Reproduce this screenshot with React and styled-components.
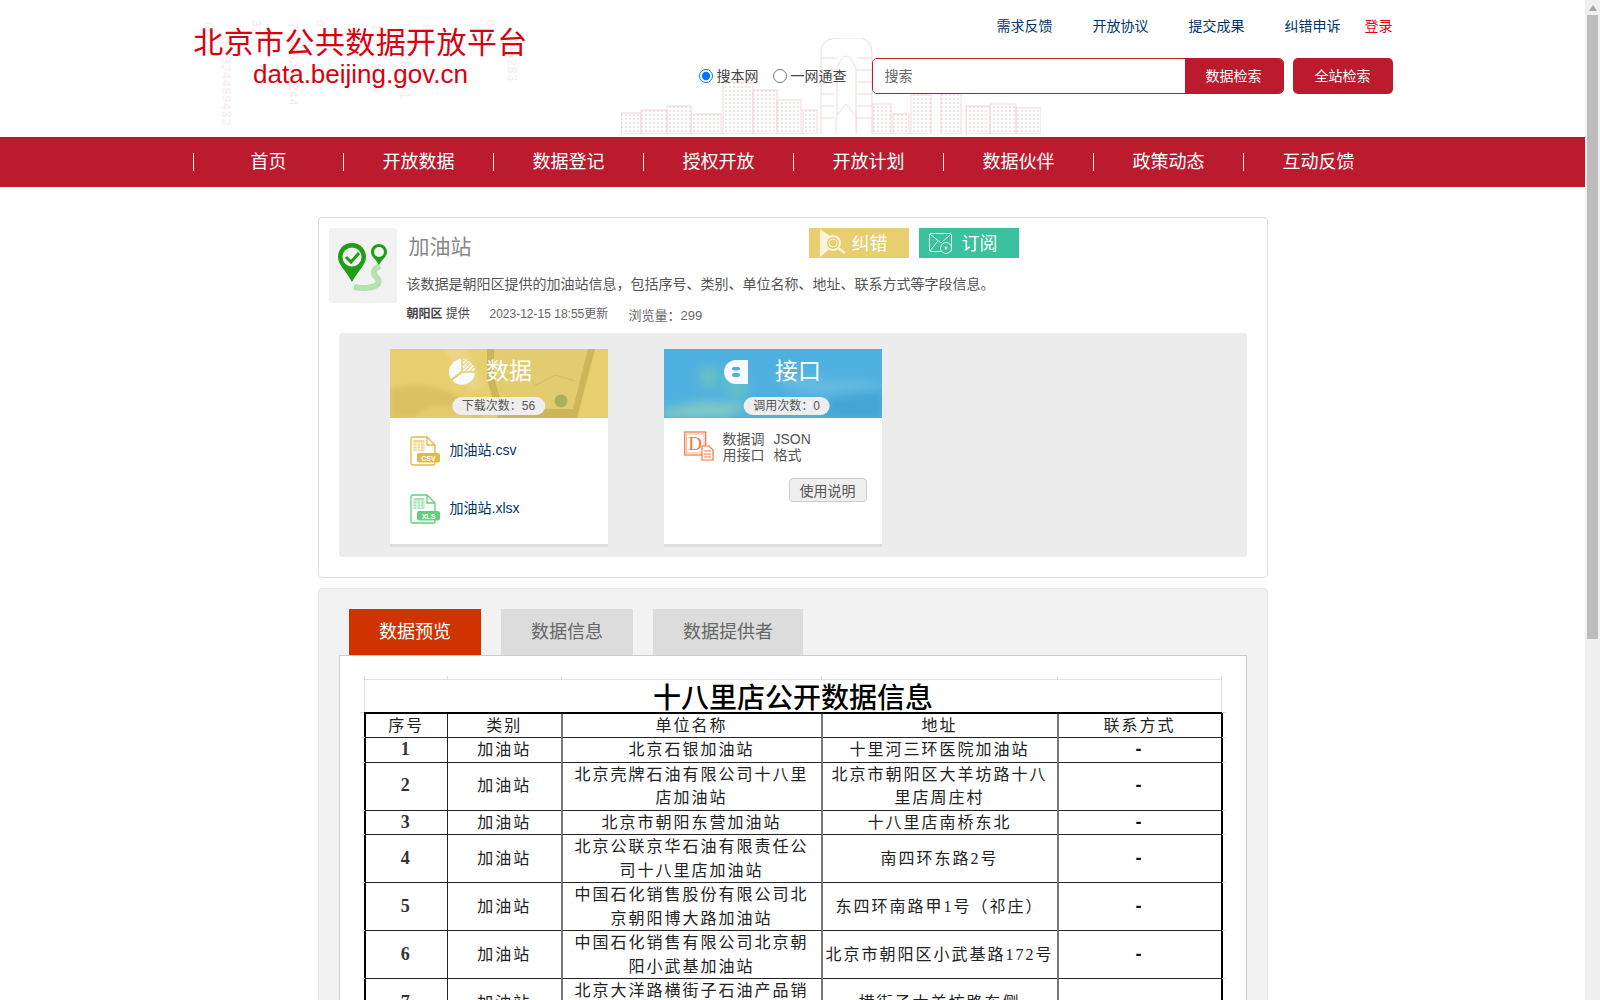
import React from 'react';
import styled, { createGlobalStyle } from 'styled-components';

const GlobalStyle = createGlobalStyle`
body{
    margin:0;
    background:#fff;
    color:#555;
    font-family:"Liberation Sans","Noto Sans CJK SC",sans-serif;
    font-size:14px;
}
`;

const navItems = ['首页', '开放数据', '数据登记', '授权开放', '开放计划', '数据伙伴', '政策动态', '互动反馈'];
const topLinks = ['需求反馈', '开放协议', '提交成果', '纠错申诉'];
const logoStrips = [
    ['00', 8, 8], ['190324489432', 26, 20], ['32', 56, 6], ['75865233244', 93, 8], ['0', 120, 6],
    ['126721849', 176, 10], ['64287631', 205, 24], ['8463', 226, 10], ['0', 290, 6], ['946283', 312, 22],
];

const rows = [
    { no: '1', name: '北京石银加油站', addr: '十里河三环医院加油站', h: 24 },
    { no: '2', name: '北京壳牌石油有限公司十八里\n店加油站', addr: '北京市朝阳区大羊坊路十八\n里店周庄村', h: 47 },
    { no: '3', name: '北京市朝阳东营加油站', addr: '十八里店南桥东北', h: 24 },
    { no: '4', name: '北京公联京华石油有限责任公\n司十八里店加油站', addr: '南四环东路2号', h: 47 },
    { no: '5', name: '中国石化销售股份有限公司北\n京朝阳博大路加油站', addr: '东四环南路甲1号（祁庄）', h: 47 },
    { no: '6', name: '中国石化销售有限公司北京朝\n阳小武基加油站', addr: '北京市朝阳区小武基路172号', h: 47 },
    { no: '7', name: '北京大洋路横街子石油产品销\n\u00a0', addr: '横街子大羊坊路东侧', h: 48 },
];

const Skyline = () => {
    const blocks = [
        [0, 75, 20, 21], [20, 72, 26, 24], [46, 68, 24, 28], [70, 76, 30, 20], [102, 44, 30, 52],
        [132, 52, 24, 44], [156, 62, 24, 34], [182, 72, 14, 24], [252, 66, 18, 30], [272, 76, 16, 20],
        [290, 57, 20, 39], [320, 56, 20, 40], [345, 68, 24, 28], [369, 66, 26, 30], [395, 70, 25, 26],
    ];
    return (
        <SkylineBox width="420" height="96" viewBox="0 0 420 96">
            <defs>
                <pattern id="windows" width="4" height="4" patternUnits="userSpaceOnUse">
                    <rect width="2" height="2" fill="#f6e3e4" />
                </pattern>
            </defs>
            {blocks.map(([x, y, w, h]) => (
                <rect key={x} x={x} y={y} width={w} height={h} fill="url(#windows)" stroke="#f1d8da" />
            ))}
            <path d="M200 96V14Q200 2 214 0H240Q250 2 251 14V96" fill="#fff" stroke="#f1d8da" />
            <path d="M216 96V30Q225 6 235 30V96M200 20H216M200 32H214M200 44H213M200 56H213M200 68H213M200 80H213M236 20H251M236 32H251M236 44H251M236 56H251M236 68H251M236 80H251" fill="none" stroke="#f1d8da" />
            <path d="M215 96V78L225 66L235 78V96" fill="#fff" stroke="#f1d8da" />
        </SkylineBox>
    );
};

const PinIcon = () => (
    <svg width="68" height="75" viewBox="0 0 68 75">
        <path d="M25 59C43 62 54 57 48 50C43 45 44 41 51 38" fill="none" stroke="#b5e0b2" strokeWidth="6" />
        <path d="M23 15C14 15 9 22 9 29C9 37 18 44 23 54C28 44 37 37 37 29C37 22 32 15 23 15Z" fill="#1f9e17" />
        <circle cx="23" cy="29" r="9.5" fill="#f2f2f2" />
        <path d="M17 29L22 34L30 25" fill="none" stroke="#1f9e17" strokeWidth="3" />
        <path d="M50 16C45 16 42 20 42 24C42 29 47 31 50 37C53 31 58 29 58 24C58 20 55 16 50 16Z" fill="#1f9e17" />
        <circle cx="50" cy="24" r="5" fill="#f2f2f2" />
    </svg>
);

const SearchMark = () => (
    <svg width="40" height="30" viewBox="0 0 40 30">
        <path d="M11 1V29L29 14Z" fill="#fbf3d8" />
        <circle cx="24" cy="15" r="7" fill="#e7cf70" stroke="#fbf3d8" strokeWidth="2" />
        <circle cx="24" cy="15" r="4" fill="none" stroke="#fbf3d8" />
        <path d="M29 20L36 25" stroke="#fbf3d8" strokeWidth="2.5" />
    </svg>
);

const MailMark = () => (
    <svg width="40" height="30" viewBox="0 0 40 30">
        <rect x="10.5" y="5.5" width="22" height="18" rx="1.5" fill="none" stroke="#d6f3ea" />
        <path d="M11 6L22 15L32 6M11 23L19 13" fill="none" stroke="#d6f3ea" />
        <circle cx="27" cy="20" r="5.5" fill="#3bc19d" stroke="#d6f3ea" />
        <circle cx="27" cy="20" r="1.5" fill="#d6f3ea" />
    </svg>
);

const PieMark = () => (
    <svg width="26" height="26" viewBox="0 0 26 26">
        <defs>
            <pattern id="hatch" width="3" height="3" patternUnits="userSpaceOnUse" patternTransform="rotate(45)">
                <rect width="1.6" height="3" fill="#fff" />
            </pattern>
        </defs>
        <path d="M12 12V0A13 13 0 0 0 2 20Z" fill="#f6fbff" />
        <path d="M13.5 14L3.5 21.5A13 13 0 0 0 26 14Z" fill="#f6fbff" />
        <path d="M14 12V0A13 13 0 0 1 26 12Z" fill="url(#hatch)" />
    </svg>
);

const PortMark = () => (
    <svg width="24" height="24" viewBox="0 0 24 24">
        <path d="M24 0H12A12 12 0 0 0 12 24H24Z" fill="#f6fbff" />
        <rect x="8" y="7" width="8" height="3.5" rx="1.7" fill="#4bb0dc" />
        <rect x="8" y="13" width="8" height="4" rx="2" fill="#4bb0dc" />
    </svg>
);

const FileMark = ({ label, color }) => (
    <svg width="30" height="30" viewBox="0 0 30 30">
        <path d="M1 3Q1 1 3 1H17L25 9V28Q25 29 23 29H3Q1 29 1 27Z" fill="#fff" stroke={color} strokeWidth="1.3" />
        <path d="M17 1V9H25" fill="none" stroke={color} strokeWidth="1.3" />
        <rect x="3.5" y="4" width="11" height="11" fill={color} opacity="0.55" />
        <path d="M3.5 7H14.5M3.5 10H14.5M3.5 13H14.5M7 7V15M10.5 7V15" stroke="#fff" strokeWidth="0.7" />
        <rect x="7" y="17" width="23" height="9.5" rx="2" fill={color} />
        <LabelText x="18.5" y="24.6">{label}</LabelText>
    </svg>
);

const DocMark = () => (
    <svg width="30" height="30" viewBox="0 0 30 30">
        <rect x="0.7" y="1" width="21" height="23" fill="none" stroke="#f4763c" strokeWidth="1.2" />
        <rect x="2.5" y="3" width="17.5" height="19" fill="none" stroke="#f9b89a" />
        <DocLetter x="11" y="19">D</DocLetter>
        <path d="M18 15H25L29 19V29H18Z" fill="#fff" stroke="#f4763c" strokeWidth="1.2" />
        <path d="M20 20H27M20 23H27M20 26H27" stroke="#f4763c" />
    </svg>
);

const YellowPhoto = () => (
    <HeadPhoto viewBox="0 0 218 69" preserveAspectRatio="none">
        <defs>
            <filter id="softy"><feGaussianBlur stdDeviation="2" /></filter>
        </defs>
        <g filter="url(#softy)">
            <path d="M0 40C30 30 70 38 95 69H0Z" fill="#dcc163" />
            <path d="M25 69C35 52 70 52 85 69Z" fill="#e3ca6b" />
            <path d="M55 0H75L95 38L80 42Z" fill="#ecd684" />
        </g>
        <path d="M97 0H205L187 69H108L97 30Z" fill="#cdb65a" />
        <path d="M104 0H198L183 60H113L104 28Z" fill="#e3cb70" />
        <path d="M112 30L130 22L146 36L165 26L185 32" fill="none" stroke="#d3bd62" />
        <circle cx="171" cy="52" r="6.5" fill="#a9b059" />
    </HeadPhoto>
);

const BluePhoto = () => (
    <HeadPhoto viewBox="0 0 218 69" preserveAspectRatio="none">
        <defs>
            <filter id="soft"><feGaussianBlur stdDeviation="5" /></filter>
        </defs>
        <g filter="url(#soft)">
            <circle cx="45" cy="28" r="11" fill="#68bfc4" />
            <circle cx="72" cy="38" r="12" fill="#62bfc9" />
            <path d="M0 60L40 52L90 56L60 69H0Z" fill="#7fc9c4" />
            <path d="M110 25L218 35V50L130 42Z" fill="#66bbe2" />
            <path d="M170 45L218 40V69H160Z" fill="#44a6d6" />
        </g>
    </HeadPhoto>
);

const App = () => {
    return (
        <>
            <GlobalStyle />
            <ScrollRail>
                <ScrollArrow />
                <ScrollThumb />
            </ScrollRail>
            <Page>
                <Top>
                    <Skyline />
                    <Logo>
                        <Strips>
                            {logoStrips.map(([text, left, top]) => (
                                <Strip key={left} $left={left} $top={top}>{text}</Strip>
                            ))}
                        </Strips>
                        <LogoTitle>北京市公共数据开放平台</LogoTitle>
                        <LogoSub>data.beijing.gov.cn</LogoSub>
                    </Logo>
                    <TopRight>
                        <TopLinks>
                            {topLinks.map(t => <TopLink key={t}>{t}</TopLink>)}
                            <Login>登录</Login>
                        </TopLinks>
                        <SearchRow>
                            <RadioLabel><input type="radio" name="scope" defaultChecked />搜本网</RadioLabel>
                            <RadioLabel><input type="radio" name="scope" />一网通查</RadioLabel>
                            <SearchBox>
                                <SearchInput placeholder="搜索" />
                                <SearchButton>数据检索</SearchButton>
                            </SearchBox>
                            <WholeButton>全站检索</WholeButton>
                        </SearchRow>
                    </TopRight>
                </Top>
                <Nav>
                    <NavInner>
                        {navItems.map(t => <NavItem key={t}>{t}</NavItem>)}
                    </NavInner>
                </Nav>
                <Main>
                    <InfoCard>
                        <InfoTop>
                            <IconBox><PinIcon /></IconBox>
                            <InfoText>
                                <TitleRow>
                                    <Title>加油站</Title>
                                    <ActionButton $bg="#e7cf70"><SearchMark />纠错</ActionButton>
                                    <ActionButton $bg="#3bc19d"><MailMark />订阅</ActionButton>
                                </TitleRow>
                                <Desc>该数据是朝阳区提供的加油站信息，包括序号、类别、单位名称、地址、联系方式等字段信息。</Desc>
                                <Meta>
                                    <Provider><b>朝阳区</b> 提供</Provider>
                                    <Updated>2023-12-15 18:55更新</Updated>
                                    <Views>浏览量：299</Views>
                                </Meta>
                            </InfoText>
                        </InfoTop>
                        <Downloads>
                            <DownCard>
                                <DownHead $bg="#e7cf70">
                                    <YellowPhoto />
                                    <HeadTitle $shift={16}><PieMark /><span>数据</span></HeadTitle>
                                    <Pill>下载次数：56</Pill>
                                </DownHead>
                                <FileList>
                                    <FileRow><FileMark label="CSV" color="#e3b93f" /><FileLink>加油站.csv</FileLink></FileRow>
                                    <FileRow><FileMark label="XLS" color="#5fd07f" /><FileLink>加油站.xlsx</FileLink></FileRow>
                                </FileList>
                            </DownCard>
                            <DownCard>
                                <DownHead $bg="#4fb1df">
                                    <BluePhoto />
                                    <HeadTitle $gap={27} $shift={0}><PortMark /><span>接口</span></HeadTitle>
                                    <Pill $offset={14}>调用次数：0</Pill>
                                </DownHead>
                                <ApiBody>
                                    <DocMark />
                                    <ApiCol $w={51}>数据调用接口</ApiCol>
                                    <ApiCol $w={40}>JSON 格式</ApiCol>
                                </ApiBody>
                                <ApiFoot><HelpButton>使用说明</HelpButton></ApiFoot>
                            </DownCard>
                        </Downloads>
                    </InfoCard>
                    <PreviewCard>
                        <Tabs>
                            <Tab $active>数据预览</Tab>
                            <Tab>数据信息</Tab>
                            <Tab $wide>数据提供者</Tab>
                        </Tabs>
                        <Preview>
                            <Sheet>
                                <colgroup>
                                    <col width="83" />
                                    <col width="114" />
                                    <col width="260" />
                                    <col width="236" />
                                    <col width="164" />
                                </colgroup>
                                <tbody>
                                    <TickRow>
                                        <td /><td /><td /><td /><td />
                                    </TickRow>
                                    <TitleSheetRow>
                                        <td colSpan="5">十八里店公开数据信息</td>
                                    </TitleSheetRow>
                                    <HeadRow>
                                        <Cell>序号</Cell>
                                        <Cell>类别</Cell>
                                        <Cell>单位名称</Cell>
                                        <Cell>地址</Cell>
                                        <Cell>联系方式</Cell>
                                    </HeadRow>
                                    {rows.map(r => (
                                        <DataRow key={r.no} $h={r.h}>
                                            <NumCell>{r.no}</NumCell>
                                            <Cell>加油站</Cell>
                                            <Cell>{r.name}</Cell>
                                            <Cell>{r.addr}</Cell>
                                            <DashCell>-</DashCell>
                                        </DataRow>
                                    ))}
                                </tbody>
                            </Sheet>
                        </Preview>
                    </PreviewCard>
                </Main>
            </Page>
        </>
    );
};

const ScrollRail = styled.div`
position:fixed;
top:0;
right:0;
bottom:0;
width:15px;
background:#f0f0f0;
z-index:5;
`;
const ScrollArrow = styled.div`
width:0;
height:0;
margin:5px auto 4px;
border-left:4px solid transparent;
border-right:4px solid transparent;
border-bottom:6px solid #a3a3a3;
`;
const ScrollThumb = styled.div`
width:11px;
height:624px;
margin:0 auto;
background:#bdbdbd;
`;
const Page = styled.div`
width:1585px;
`;
const Top = styled.header`
position:relative;
width:1200px;
height:137px;
margin:0 auto;
display:flex;
justify-content:space-between;
`;
const SkylineBox = styled.svg`
position:absolute;
left:428px;
top:38px;
`;
const Logo = styled.div`
position:relative;
width:336px;
padding-top:22px;
color:#d9000f;
text-align:center;
`;
const Strips = styled.div`
position:absolute;
inset:14px 0 4px 0;
overflow:hidden;
`;
const Strip = styled.span`
position:absolute;
left:${p => p.$left}px;
top:${p => p.$top}px;
writing-mode:vertical-rl;
font-size:12px;
color:#f8eaea;
letter-spacing:1px;
`;
const LogoTitle = styled.div`
position:relative;
font-size:30px;
line-height:36px;
white-space:nowrap;
letter-spacing:0.4px;
font-family:"Noto Sans CJK SC",sans-serif;
`;
const LogoSub = styled.div`
position:relative;
font-size:26px;
line-height:32px;
font-family:"Liberation Sans",sans-serif;
`;
const TopRight = styled.div`
position:relative;
display:flex;
flex-direction:column;
align-items:flex-end;
padding-top:16px;
`;
const TopLinks = styled.div`
display:flex;
line-height:20px;
`;
const TopLink = styled.a`
color:#003366;
margin-right:40px;
&:nth-child(4){
    margin-right:24px;
}
`;
const Login = styled.a`
color:#e60012;
`;
const SearchRow = styled.div`
display:flex;
align-items:center;
margin-top:22px;
height:36px;
`;
const RadioLabel = styled.label`
display:flex;
align-items:center;
margin-right:14px;
padding-bottom:2px;
color:#444;
input{
    margin:2px 4px 0 0;
    width:14px;
    height:14px;
}
&:nth-child(2){
    margin-right:25px;
}
`;
const SearchBox = styled.div`
display:flex;
width:412px;
height:36px;
box-sizing:border-box;
border:1px solid #bc1b2d;
border-radius:5px;
overflow:hidden;
`;
const SearchInput = styled.input`
flex:1;
min-width:0;
border:0;
outline:0;
padding:0 12px;
font-size:14px;
font-family:inherit;
&::placeholder{
    color:#666;
}
`;
const SearchButton = styled.button`
width:98px;
padding:0 0 2px;
border:0;
background:#bc1b2d;
color:#fff;
font-size:14px;
font-family:inherit;
`;
const WholeButton = styled(SearchButton)`
width:100px;
height:36px;
margin-left:9px;
border-radius:5px;
`;
const Nav = styled.nav`
background:#bc1b2d;
height:50px;
display:flex;
justify-content:center;
`;
const NavInner = styled.div`
width:1200px;
display:flex;
align-items:center;
`;
const NavItem = styled.a`
width:150px;
height:18px;
box-sizing:border-box;
border-left:1.5px solid #fff;
display:flex;
align-items:center;
justify-content:center;
padding:0 0 4px 1px;
color:#fff;
font-size:18px;
`;
const Main = styled.main`
width:950px;
margin:0 auto;
padding:30px 0 40px;
`;
const InfoCard = styled.section`
box-sizing:border-box;
height:361px;
border:1px solid #ddd;
border-radius:4px;
padding:10px 20px 20px 10px;
`;
const InfoTop = styled.div`
display:flex;
height:105px;
`;
const IconBox = styled.div`
width:68px;
height:75px;
background:#f2f2f2;
border-radius:3px;
margin-right:10px;
`;
const InfoText = styled.div`
flex:1;
`;
const TitleRow = styled.div`
display:flex;
align-items:center;
height:30px;
`;
const Title = styled.h1`
width:400px;
margin:0 0 0 2px;
font-size:21px;
font-weight:normal;
color:#888;
position:relative;
top:2px;
`;
const ActionButton = styled.button`
display:flex;
align-items:center;
gap:3px;
width:100px;
height:30px;
margin-right:10px;
padding:0 0 3px;
border:0;
background:${p => p.$bg};
color:#fff;
font-size:18px;
font-family:inherit;
svg{
    margin-bottom:-3px;
}
`;
const Desc = styled.p`
margin:16px 0 0;
font-size:14px;
line-height:20px;
color:#555;
`;
const Meta = styled.div`
display:flex;
align-items:baseline;
margin-top:11px;
font-size:12px;
line-height:18px;
color:#666;
`;
const Provider = styled.span`
width:83px;
color:#444;
`;
const Updated = styled.span`
width:139px;
`;
const Views = styled.span`
position:relative;
top:2px;
font-size:13px;
`;
const Downloads = styled.div`
display:flex;
gap:56px;
height:224px;
margin-left:10px;
padding:16px 0 0 51px;
box-sizing:border-box;
background:#ececec;
border-radius:4px;
`;
const DownCard = styled.div`
width:218px;
height:198px;
box-sizing:border-box;
background:#fff;
border-bottom:3px solid #ddd;
`;
const DownHead = styled.div`
position:relative;
height:69px;
background:${p => p.$bg};
overflow:hidden;
`;
const HeadPhoto = styled.svg`
position:absolute;
inset:0;
width:100%;
height:100%;
`;
const HeadTitle = styled.div`
position:relative;
display:flex;
align-items:center;
justify-content:center;
gap:${p => p.$gap || 11}px;
height:42px;
padding-right:${p => p.$shift}px;
color:#fff;
font-size:23px;
svg{
    position:relative;
    top:2px;
}
span{
    position:relative;
    top:-1px;
}
`;
const Pill = styled.div`
position:absolute;
left:calc(50% + ${p => p.$offset || 0}px);
bottom:3px;
transform:translateX(-50%);
height:18px;
padding:0 10px;
white-space:nowrap;
background:#eee;
border-radius:9px;
font-size:12px;
line-height:18px;
color:#555;
`;
const FileList = styled.ul`
list-style:none;
margin:0;
padding:18px 0 0 20px;
`;
const FileRow = styled.li`
display:flex;
align-items:center;
gap:10px;
height:30px;
margin-bottom:28px;
`;
const FileLink = styled.a`
color:#003366;
font-size:14px;
padding-bottom:4px;
`;
const LabelText = styled.text`
font-size:7px;
font-weight:bold;
fill:#fff;
text-anchor:middle;
font-family:"Liberation Sans",sans-serif;
`;
const DocLetter = styled.text`
font-size:19px;
fill:#f4763c;
text-anchor:middle;
font-family:"Liberation Serif",serif;
`;
const ApiBody = styled.div`
display:flex;
align-items:flex-start;
padding:13px 0 0 20px;
`;
const ApiCol = styled.div`
width:${p => p.$w}px;
margin-left:9px;
font-size:14px;
line-height:16px;
color:#555;
&:last-child{
    margin-left:0;
}
`;
const ApiFoot = styled.div`
display:flex;
justify-content:flex-end;
padding:15px 15px 0 0;
`;
const HelpButton = styled.button`
width:78px;
height:24px;
padding:0;
background:#efefef;
border:1px solid #ccc;
border-radius:4px;
color:#555;
font-size:14px;
font-family:inherit;
`;
const PreviewCard = styled.section`
margin-top:10px;
box-sizing:border-box;
min-height:920px;
background:#f2f2f2;
border:1px solid #e8e8e8;
border-radius:4px;
padding:20px;
`;
const Tabs = styled.div`
display:flex;
gap:20px;
margin-left:10px;
`;
const Tab = styled.div`
width:${p => p.$wide ? 150 : 132}px;
height:46px;
box-sizing:border-box;
padding:0 0 4px 1px;
display:flex;
align-items:center;
justify-content:center;
font-size:18px;
background:${p => p.$active ? '#cf3400' : '#dcdcdc'};
color:${p => p.$active ? '#fff' : '#666'};
`;
const Preview = styled.div`
background:#fff;
border:1px solid #ccc;
min-height:800px;
padding:20px 24px 0;
`;
const Sheet = styled.table`
width:857px;
table-layout:fixed;
border-collapse:collapse;
color:#222;
font-family:"Liberation Serif","Noto Sans CJK SC",serif;
font-size:16px;
td{
    position:relative;
    padding:0;
    text-align:center;
    white-space:pre-line;
    letter-spacing:2px;
    line-height:23.5px;
}
tr:not(:first-child) > td:first-child::before,
tr:not(:first-child) > td:last-child::after{
    content:'';
    position:absolute;
    bottom:-1px;
    width:4px;
    height:1px;
    background:#ddd;
}
tr:not(:first-child) > td:first-child::before{
    left:-5px;
}
tr:not(:first-child) > td:last-child::after{
    right:-5px;
}
`;
const TickRow = styled.tr`
height:3px;
td{
    border-left:1px solid #ddd;
    line-height:0;
}
td:last-child{
    border-right:1px solid #ddd;
}
`;
const TitleSheetRow = styled.tr`
td{
    border:1px solid #e2e2e2;
    border-bottom:0;
    font-size:28px;
    font-weight:500;
    line-height:27px;
    letter-spacing:0;
    color:#000;
    padding-top:5px;
}
`;
const HeadRow = styled.tr`
height:23px;
td{
    border-top:2px solid #000;
}
`;
const DataRow = styled.tr`
height:${p => p.$h}px;
`;
const Cell = styled.td`
border:1px solid #222;
&:first-child{
    border-left:2px solid #000;
}
&:nth-child(3),
&:nth-child(4),
&:nth-child(5){
    border-left:2px solid #777;
}
&:last-child{
    border-right:2px solid #000;
}
`;
const NumCell = styled(Cell)`
font-size:18px;
font-weight:bold;
color:#333;
`;
const DashCell = styled(Cell)`
font-family:"Liberation Sans",sans-serif;
font-size:18px;
font-weight:bold;
color:#111;
`;

export default App;
